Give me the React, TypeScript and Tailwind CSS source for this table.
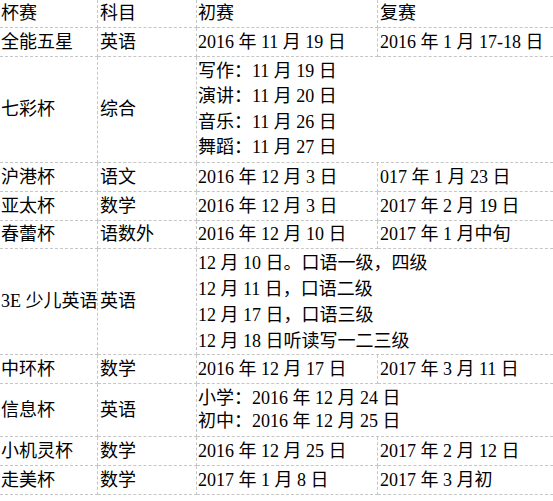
import React from 'react';

type Row = {
  h: string;
  name: string;
  subject: string;
  first: string[];
  second?: string;
  lead?: string;
};

const rows: Row[] = [
  { h: 'h-[29px]', name: '全能五星', subject: '英语', first: ['2016 年 11 月 19 日'], second: '2016 年 1 月 17-18 日' },
  {
    h: 'h-[106px]',
    name: '七彩杯',
    subject: '综合',
    first: ['写作：11 月 19 日', '演讲：11 月 20 日', '音乐：11 月 26 日', '舞蹈：11 月 27 日'],
    lead: 'leading-[25.5px]',
  },
  { h: 'h-[29px]', name: '沪港杯', subject: '语文', first: ['2016 年 12 月 3 日'], second: '017 年 1 月 23 日' },
  { h: 'h-[29px]', name: '亚太杯', subject: '数学', first: ['2016 年 12 月 3 日'], second: '2017 年 2 月 19 日' },
  { h: 'h-[28px]', name: '春蕾杯', subject: '语数外', first: ['2016 年 12 月 10 日'], second: '2017 年 1 月中旬' },
  {
    h: 'h-[106px]',
    name: '3E 少儿英语',
    subject: '英语',
    first: ['12 月 10 日。口语一级，四级', '12 月 11 日，口语二级', '12 月 17 日，口语三级', '12 月 18 日听读写一二三级'],
    lead: 'leading-[26px]',
  },
  { h: 'h-[29px]', name: '中环杯', subject: '数学', first: ['2016 年 12 月 17 日'], second: '2017 年 3 月 11 日' },
  {
    h: 'h-[53px]',
    name: '信息杯',
    subject: '英语',
    first: ['小学：2016 年 12 月 24 日', '初中：2016 年 12 月 25 日'],
    lead: 'leading-[23.5px]',
  },
  { h: 'h-[29px]', name: '小机灵杯', subject: '数学', first: ['2016 年 12 月 25 日'], second: '2017 年 2 月 12 日' },
  { h: 'h-[29px]', name: '走美杯', subject: '数学', first: ['2017 年 1 月 8 日'], second: '2017 年 3 月初' },
];

const cell = 'flex items-center whitespace-nowrap border-b border-dashed border-[#c6c6c6]';

export default function App() {
  return (
    <div className="w-[553px] h-[501px] overflow-hidden bg-white text-black text-[18px] font-['Liberation_Serif','Noto_Sans_CJK_SC',serif]">
      <div className="grid grid-cols-[98px_99px_181px_1fr]">
        {/* header */}
        <div className={`${cell} h-[28px] border-r pl-px`}>杯赛</div>
        <div className={`${cell} h-[28px] border-r pl-[2px]`}>科目</div>
        <div className={`${cell} h-[28px] border-r pl-px`}>初赛</div>
        <div className={`${cell} h-[28px] pl-[2px]`}>复赛</div>

        {rows.map((r) => (
          <React.Fragment key={r.name}>
            <div className={`${cell} ${r.h} border-r pl-px`}>{r.name}</div>
            <div className={`${cell} ${r.h} border-r pl-[2px]`}>{r.subject}</div>
            {r.second ? (
              <>
                <div className={`${cell} ${r.h} border-r pl-px`}>{r.first[0]}</div>
                <div className={`${cell} ${r.h} pl-[2px]`}>{r.second}</div>
              </>
            ) : (
              <div className={`${cell} ${r.h} col-span-2 pl-px`}>
                <div className={`flex flex-col ${r.lead}`}>
                  {r.first.map((line) => (
                    <span key={line}>{line}</span>
                  ))}
                </div>
              </div>
            )}
          </React.Fragment>
        ))}
      </div>
    </div>
  );
}
